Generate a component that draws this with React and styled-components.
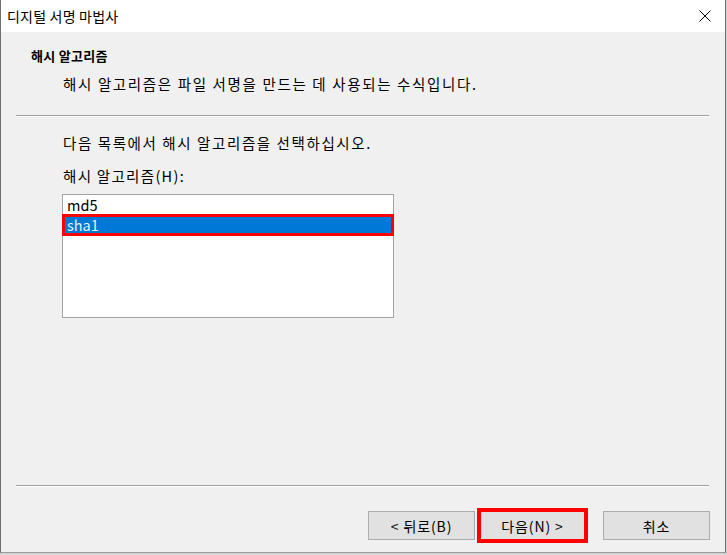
import React from "react";
import styled, { createGlobalStyle } from "styled-components";

const Global = createGlobalStyle`
  html, body { margin: 0; padding: 0; background: #d4d4d4; }
  body { font-family: "Noto Sans CJK KR", "Noto Sans", sans-serif; color: #000; }
  * { box-sizing: border-box; }
`;

const Window = styled.div`
  width: 726px;
  height: 553px;
  display: flex;
  flex-direction: column;
  background: #f0f0f0;
  border-left: 1px solid #6f6f6f;
  border-right: 1px solid #6f6f6f;
  border-bottom: 1px solid #9a9a9a;
`;

const TitleBar = styled.div`
  height: 32px;
  flex: none;
  background: #fff;
  display: flex;
  align-items: center;
  justify-content: space-between;
  padding: 0 0 0 6px;
`;

const TitleText = styled.span`
  font-size: 14px;
  letter-spacing: 0.2px;
  line-height: 32px;
`;

const CloseBtn = styled.div`
  width: 40px;
  height: 32px;
  display: flex;
  align-items: center;
  justify-content: center;
`;

const Content = styled.div`
  flex: 1;
  display: flex;
  flex-direction: column;
`;

const Header = styled.div`
  height: 83px;
  flex: none;
  padding: 14px 0 0 30px;
`;

const Heading = styled.div`
  font-weight: 700;
  font-size: 13px;
  letter-spacing: 0.3px;
  line-height: 20px;
`;

const Subtitle = styled.div`
  margin: 8px 0 0 32px;
  font-size: 14.5px;
  letter-spacing: 1.65px;
  line-height: 20px;
`;

const Separator = styled.div`
  flex: none;
  margin: 0 16px 0 15px;
  border-top: 1px solid #a0a0a0;
  border-bottom: 1px solid #ffffff;
`;

const Body = styled.div`
  flex: 1;
  padding: 16px 0 0 62px;
`;

const Text = styled.div`
  font-size: 14.5px;
  letter-spacing: ${(p) => p.$ls ?? "1.6px"};
  line-height: 20px;
  margin-top: ${(p) => p.$mt || 0}px;
`;

const ListBox = styled.div`
  margin: 8px 0 0 -1px;
  width: 332px;
  height: 124px;
  background: #fff;
  border: 1px solid #a3a3a3;
  display: flex;
  flex-direction: column;
`;

const Item = styled.div`
  height: ${(p) => (p.$selected ? 22 : 19)}px;
  line-height: ${(p) => (p.$selected ? 16 : 19)}px;
  font-size: 14.5px;
  padding-left: ${(p) => (p.$selected ? 2 : 4)}px;
  margin: 0 ${(p) => (p.$selected ? -1 : 0)}px;
  background: ${(p) => (p.$selected ? "#0078d7" : "transparent")};
  color: ${(p) => (p.$selected ? "#e8f2fc" : "#000")};
  border: ${(p) => (p.$selected ? "3px solid #ff0000" : "none")};
`;

const Footer = styled.div`
  flex: none;
  display: flex;
  justify-content: flex-end;
  align-items: center;
  padding: 21px 15px 9px 0;
`;

const Button = styled.div`
  width: 107px;
  height: 29px;
  background: #e1e1e1;
  border: 1px solid #adadad;
  display: flex;
  align-items: center;
  justify-content: center;
  font-size: 14px;
  letter-spacing: 0.9px;
  margin-left: ${(p) => p.$ml || 0}px;
`;

const Highlight = styled.div`
  width: 111px;
  height: 35px;
  border: 4px solid #ff0000;
  margin-left: ${(p) => p.$ml || 0}px;
  display: flex;
`;

const InnerButton = styled.div`
  flex: 1;
  background: #e1e1e1;
  display: flex;
  align-items: center;
  justify-content: center;
  font-size: 14px;
  letter-spacing: 0.9px;
`;

export default function App() {
  return (
    <>
      <Global />
      <Window>
        <TitleBar>
          <TitleText>디지털 서명 마법사</TitleText>
          <CloseBtn>
            <svg width="12" height="12" viewBox="0 0 12 12">
              <path d="M0.5 0.5 L11.5 11.5 M11.5 0.5 L0.5 11.5" stroke="#000" strokeWidth="1" fill="none" />
            </svg>
          </CloseBtn>
        </TitleBar>
        <Content>
          <Header>
            <Heading>해시 알고리즘</Heading>
            <Subtitle>해시 알고리즘은 파일 서명을 만드는 데 사용되는 수식입니다.</Subtitle>
          </Header>
          <Separator />
          <Body>
            <Text>다음 목록에서 해시 알고리즘을 선택하십시오.</Text>
            <Text $mt={13} $ls="1.3px">해시 알고리즘(H):</Text>
            <ListBox>
              <Item>md5</Item>
              <Item $selected>sha1</Item>
            </ListBox>
          </Body>
          <Separator />
          <Footer>
            <Button>&lt; 뒤로(B)</Button>
            <Highlight $ml={2}>
              <InnerButton>다음(N) &gt;</InnerButton>
            </Highlight>
            <Button $ml={15}>취소</Button>
          </Footer>
        </Content>
      </Window>
    </>
  );
}
